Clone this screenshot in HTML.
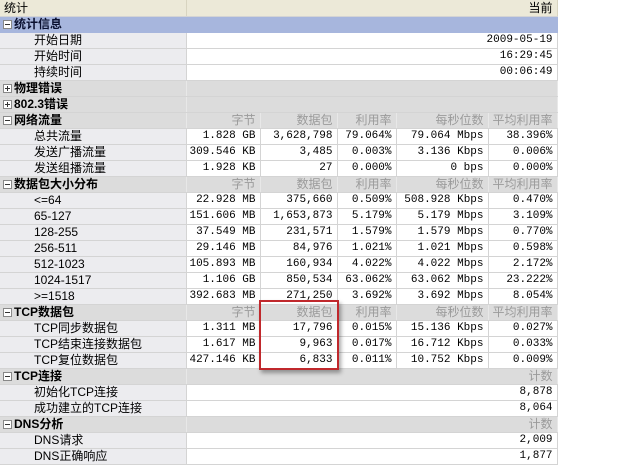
<!DOCTYPE html>
<html><head><meta charset="utf-8"><style>
body{margin:0;background:#fff;width:640px;height:461px;overflow:hidden;font-family:"Liberation Sans","Noto Sans CJK SC",sans-serif;font-size:12px;color:#000}
table{border-collapse:collapse;table-layout:fixed;width:557px;position:absolute;left:0;top:0}
td{height:15px;padding:0 4px 0 0;border-bottom:1px solid #d4d4d4;border-right:1px solid #d4d4d4;white-space:nowrap;overflow:hidden;text-align:right;font-family:"Liberation Mono","Noto Sans CJK SC",monospace;font-size:11px;line-height:15px}
td.l{text-align:left;background:#ececef;font-family:"Liberation Sans","Noto Sans CJK SC",sans-serif;font-size:12px;padding-left:34px}
tr.h td{background:#ece9d8;height:16px;font-family:"Liberation Sans","Noto Sans CJK SC",sans-serif;font-size:12px;border-right:1px solid #d8d4c0}
tr.h td.l{padding-left:4px}
tr.b td{background:#a7b6dd;border-color:#a7b6dd}
tr.g td{background:#dcdcdc;color:#9a9a9a;font-family:"Liberation Sans","Noto Sans CJK SC",sans-serif;font-size:12px;border-right-color:#e8e8e8}
tr.g td.l,tr.b td.l{padding-left:3px;font-weight:bold;color:#000}
tr.b td.l{color:#0a1030}
.t{display:inline-block;width:7px;height:7px;border:1px solid #888;background:#fff;position:relative;margin-right:2px;vertical-align:-1px}
.t:before{content:"";position:absolute;left:1px;top:3px;width:5px;height:1px;background:#333}
.p:after{content:"";position:absolute;left:3px;top:1px;width:1px;height:5px;background:#333}
#box{position:absolute;left:259px;top:300px;width:76px;height:66px;border:2px solid #c0282c;box-shadow:2px 3px 4px rgba(0,0,0,.35)}
</style></head><body>
<table>
<colgroup><col style="width:186px"><col style="width:74px"><col style="width:77px"><col style="width:59px"><col style="width:92px"><col style="width:69px"></colgroup>
<tr class="h"><td class="l" colspan="1">统计</td><td colspan="5">当前</td></tr>
<tr class="b"><td class="l"><span class="t"></span>统计信息</td><td colspan="5"></td></tr>
<tr><td class="l">开始日期</td><td colspan="5">2009-05-19</td></tr>
<tr><td class="l">开始时间</td><td colspan="5">16:29:45</td></tr>
<tr><td class="l">持续时间</td><td colspan="5">00:06:49</td></tr>
<tr class="g"><td class="l"><span class="t p"></span>物理错误</td><td colspan="5"></td></tr>
<tr class="g"><td class="l"><span class="t p"></span>802.3错误</td><td colspan="5"></td></tr>
<tr class="g"><td class="l"><span class="t"></span>网络流量</td><td>字节</td><td>数据包</td><td>利用率</td><td>每秒位数</td><td>平均利用率</td></tr>
<tr><td class="l">总共流量</td><td>1.828 GB</td><td>3,628,798</td><td>79.064%</td><td>79.064 Mbps</td><td>38.396%</td></tr>
<tr><td class="l">发送广播流量</td><td>309.546 KB</td><td>3,485</td><td>0.003%</td><td>3.136 Kbps</td><td>0.006%</td></tr>
<tr><td class="l">发送组播流量</td><td>1.928 KB</td><td>27</td><td>0.000%</td><td>0 bps</td><td>0.000%</td></tr>
<tr class="g"><td class="l"><span class="t"></span>数据包大小分布</td><td>字节</td><td>数据包</td><td>利用率</td><td>每秒位数</td><td>平均利用率</td></tr>
<tr><td class="l">&lt;=64</td><td>22.928 MB</td><td>375,660</td><td>0.509%</td><td>508.928 Kbps</td><td>0.470%</td></tr>
<tr><td class="l">65-127</td><td>151.606 MB</td><td>1,653,873</td><td>5.179%</td><td>5.179 Mbps</td><td>3.109%</td></tr>
<tr><td class="l">128-255</td><td>37.549 MB</td><td>231,571</td><td>1.579%</td><td>1.579 Mbps</td><td>0.770%</td></tr>
<tr><td class="l">256-511</td><td>29.146 MB</td><td>84,976</td><td>1.021%</td><td>1.021 Mbps</td><td>0.598%</td></tr>
<tr><td class="l">512-1023</td><td>105.893 MB</td><td>160,934</td><td>4.022%</td><td>4.022 Mbps</td><td>2.172%</td></tr>
<tr><td class="l">1024-1517</td><td>1.106 GB</td><td>850,534</td><td>63.062%</td><td>63.062 Mbps</td><td>23.222%</td></tr>
<tr><td class="l">&gt;=1518</td><td>392.683 MB</td><td>271,250</td><td>3.692%</td><td>3.692 Mbps</td><td>8.054%</td></tr>
<tr class="g"><td class="l"><span class="t"></span>TCP数据包</td><td>字节</td><td>数据包</td><td>利用率</td><td>每秒位数</td><td>平均利用率</td></tr>
<tr><td class="l">TCP同步数据包</td><td>1.311 MB</td><td>17,796</td><td>0.015%</td><td>15.136 Kbps</td><td>0.027%</td></tr>
<tr><td class="l">TCP结束连接数据包</td><td>1.617 MB</td><td>9,963</td><td>0.017%</td><td>16.712 Kbps</td><td>0.033%</td></tr>
<tr><td class="l">TCP复位数据包</td><td>427.146 KB</td><td>6,833</td><td>0.011%</td><td>10.752 Kbps</td><td>0.009%</td></tr>
<tr class="g"><td class="l"><span class="t"></span>TCP连接</td><td colspan="5">计数</td></tr>
<tr><td class="l">初始化TCP连接</td><td colspan="5">8,878</td></tr>
<tr><td class="l">成功建立的TCP连接</td><td colspan="5">8,064</td></tr>
<tr class="g"><td class="l"><span class="t"></span>DNS分析</td><td colspan="5">计数</td></tr>
<tr><td class="l">DNS请求</td><td colspan="5">2,009</td></tr>
<tr><td class="l">DNS正确响应</td><td colspan="5">1,877</td></tr>
</table>
<div id="box"></div>
</body></html>
